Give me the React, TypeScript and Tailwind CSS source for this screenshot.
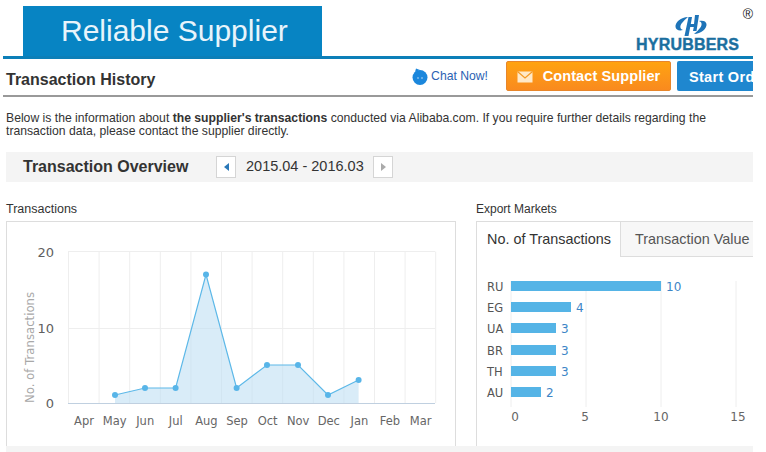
const months = ["Apr", "May", "Jun", "Jul", "Aug", "Sep", "Oct", "Nov", "Dec", "Jan", "Feb", "Mar"];

// chart coordinates are relative to the inside of the bordered box
const points: [number, number][] = [
  [108, 173],
  [138, 166],
  [168.6, 166],
  [199, 52.6],
  [229.6, 166],
  [260, 143],
  [291, 143],
  [321, 173],
  [351.6, 158],
];

const markets = [
  { code: "RU", value: 10, y: 59 },
  { code: "EG", value: 4, y: 80 },
  { code: "UA", value: 3, y: 101 },
  { code: "BR", value: 3, y: 123 },
  { code: "TH", value: 3, y: 144 },
  { code: "AU", value: 2, y: 165 },
];

function LineChart() {
  const line = points.map((p) => p.join(",")).join(" ");
  const area = `108,181 ${line} 351.6,181`;
  return (
    <svg width="448" height="224" className="block" style={{ fontFamily: '"DejaVu Sans", sans-serif' }}>
      {Array.from({ length: 13 }).map((_, i) => (
        <line key={i} x1={61.5 + i * 30.6} x2={61.5 + i * 30.6} y1="29.5" y2="181" stroke="#eeeeee" />
      ))}
      <line x1="61" x2="428" y1="29.5" y2="29.5" stroke="#eeeeee" />
      <line x1="61" x2="428" y1="106.5" y2="106.5" stroke="#eeeeee" />
      <polygon points={area} fill="#bfe0f3" fillOpacity="0.6" />
      <line x1="61" x2="428" y1="181.5" y2="181.5" stroke="#c0d0e0" />
      <polyline points={line} fill="none" stroke="#5cb8e8" strokeWidth="1.2" />
      {points.map((p, i) => (
        <circle key={i} cx={p[0]} cy={p[1]} r="3" fill="#58b5e8" />
      ))}
      <g fill="#606060" fontSize="13" textAnchor="end">
        <text x="47" y="35">20</text>
        <text x="47" y="111">10</text>
        <text x="47" y="186">0</text>
      </g>
      <text
        transform="rotate(-90 27 181)"
        x="27"
        y="181"
        fill="#a8a8a8"
        fontSize="11.7"
      >
        No. of Transactions
      </text>
      <g fill="#666666" fontSize="11.5" textAnchor="middle">
        {months.map((m, i) => (
          <text key={m} x={77 + i * 30.6} y="203">{m}</text>
        ))}
      </g>
    </svg>
  );
}

function BarChart() {
  const left = 34;
  const unit = 15;
  return (
    <svg width="276" height="190" className="block" style={{ fontFamily: '"DejaVu Sans", sans-serif' }}>
      {[0, 5, 10, 15].map((v) => (
        <line key={v} x1={left + v * unit} x2={left + v * unit} y1="24" y2="150" stroke="#eeeeee" />
      ))}
      {markets.map((m) => (
        <g key={m.code}>
          <rect x={left} y={m.y - 35} width={m.value * unit} height="10" fill="#55b4e6" />
          <text x="10" y={m.y - 25} fontSize="11.5" fill="#555555">{m.code}</text>
          <text x={left + m.value * unit + 5} y={m.y - 25} fontSize="12" fill="#3d85c6">{m.value}</text>
        </g>
      ))}
      <g fontSize="12" fill="#666666" textAnchor="middle">
        <text x={left + 4} y="164">0</text>
        <text x="108" y="164">5</text>
        <text x="184" y="164">10</text>
        <text x="261" y="164">15</text>
      </g>
    </svg>
  );
}

function Logo() {
  return (
    <div className="relative w-[117px] h-[56px]">
      <svg width="32" height="23" viewBox="0 0 32 23" className="absolute left-[39px] top-[14px]">
        <path d="M13 3C6 3.500 0 8 0.500 13C1 16 4 17 8 16C5 15 4.500 12 7 9C8.500 7 10.500 5 13 3z" fill="#1e74b8" />
        <path d="M19 20C26 19.500 32 15 31.500 10C31 7 28 6 24 7C27 8 27.500 11 25 14C23.500 16 21.500 18 19 20z" fill="#1e74b8" />
        <path d="M13.500 3H17L15.800 10H19L20 1H24L21.500 17H18L18.800 13H15.200L13.500 22H9.500z" fill="#1e74b8" />
      </svg>
      <span className="absolute left-[0px] top-[35px] text-[16px] leading-[20px] font-bold tracking-[0.2px] text-[#1b6f9f] font-['Liberation_Sans',sans-serif] [-webkit-text-stroke:0.4px_#1b6f9f]">
        HYRUBBERS
      </span>
      <span className="absolute right-[0px] top-[6px] text-[14px] leading-[16px] text-[#222222] font-['Liberation_Sans',sans-serif]">®</span>
    </div>
  );
}

export default function App() {
  return (
    <div className="w-[766px] h-[452px] overflow-hidden bg-white font-['Liberation_Sans',Arial,sans-serif] text-[#333333]">
      <div className="ml-[3px] w-[750px]">
        {/* banner */}
        <div className="flex justify-between items-end h-[59px] pt-[6px] border-b-[3px] border-[#0c7fb8]">
          <div className="ml-[20px] w-[299px] h-[50px] bg-[#0784c3] flex items-center pl-[38px] pb-[2px] text-[30px] text-[#e8f4fb]">
            Reliable Supplier
          </div>
          <Logo />
        </div>

        {/* title row */}
        <div className="flex items-start h-[38px] pt-[2px] border-b-[2px] border-[#999999] overflow-hidden">
          <h1 className="pl-[3px] pt-[10px] text-[16px] leading-[18px] font-bold flex-1">Transaction History</h1>
          <svg width="16" height="17" viewBox="0 0 16 17" className="mt-[7px] mr-[3px] -ml-[1px]">
            <circle cx="8" cy="9.500" r="7.500" fill="#1b87dc" />
            <path d="M3 4 L4 0.500 L8 2z" fill="#1b87dc" />
            <circle cx="6" cy="10" r="0.800" fill="#bfe0f8" />
            <circle cx="10" cy="10" r="0.800" fill="#bfe0f8" />
          </svg>
          <span className="mt-[8px] text-[12.200px] leading-[14px] text-[#2b62b3] mr-[18px]">Chat Now!</span>
          <div className="flex items-center justify-center gap-[10px] pt-[1px] w-[165px] h-[30px] rounded-[2px] bg-gradient-to-b from-[#ffa30f] to-[#f98a1e] border border-[#e8862a] text-[14.500px] tracking-[0.1px] font-bold text-white">
            <svg width="16" height="12" viewBox="0 0 16 12">
              <rect x="0.500" y="0.500" width="15" height="11" fill="#ffe9c8" />
              <path d="M0.500 0.500 L8 7 L15.500 0.500" fill="none" stroke="#f59a25" strokeWidth="1.200" />
            </svg>
            Contact Supplier
          </div>
          <div className="ml-[6px] w-[76px] h-[30px] shrink-0 rounded-l-[2px] bg-[#1f87cf] pl-[12px] pt-[1px] text-[14.500px] tracking-[0.3px] leading-[30px] font-bold text-white whitespace-nowrap overflow-hidden">
            Start Order
          </div>
        </div>

        <div className="pl-[3px]">
          <p className="mt-[15px] w-[720px] text-[12.200px] leading-[13px]">
            Below is the information about <b>the supplier's transactions</b> conducted via Alibaba.com. If you require further details regarding the transaction data, please contact the supplier directly.
          </p>

          {/* overview bar */}
          <div className="mt-[14px] h-[30px] bg-[#f4f4f4] flex items-center pl-[17px]">
            <h2 className="w-[193px] text-[16px] font-bold">Transaction Overview</h2>
            <div className="w-[20px] h-[22px] bg-white border border-[#d5d5d5] flex items-center justify-center">
              <div className="w-0 h-0 border-y-[4px] border-y-transparent border-r-[5px] border-r-[#2a78b8]" />
            </div>
            <span className="w-[137px] pl-[10px] text-[14.500px] whitespace-nowrap">2015.04 - 2016.03</span>
            <div className="w-[20px] h-[22px] bg-white border border-[#d5d5d5] flex items-center justify-center">
              <div className="w-0 h-0 border-y-[4px] border-y-transparent border-l-[5px] border-l-[#aaaaaa]" />
            </div>
          </div>

          {/* charts */}
          <div className="mt-[20px] flex gap-[20px]">
            <div className="w-[450px] shrink-0">
              <div className="h-[19px] text-[12.500px] leading-[14px]">Transactions</div>
              <div className="h-[225px] border-x border-t border-[#dddddd] overflow-hidden">
                <LineChart />
              </div>
            </div>
            <div className="w-[277px] shrink-0">
              <div className="h-[19px] text-[12px] leading-[14px]">Export Markets</div>
              <div className="h-[225px] border-l border-t border-[#dddddd] overflow-hidden">
                <div className="flex h-[35px] text-[14.400px] whitespace-nowrap">
                  <div className="w-[144px] shrink-0 pl-[10px] leading-[35px] border-r border-[#dddddd]">No. of Transactions</div>
                  <div className="flex-1 pl-[14px] leading-[34px] bg-[#f7f7f7] border-b border-[#dddddd] text-[#555555] overflow-hidden">Transaction Value</div>
                </div>
                <BarChart />
              </div>
            </div>
          </div>
          <div className="h-[6px] bg-[#f4f4f4]" />
        </div>
      </div>
    </div>
  );
}
